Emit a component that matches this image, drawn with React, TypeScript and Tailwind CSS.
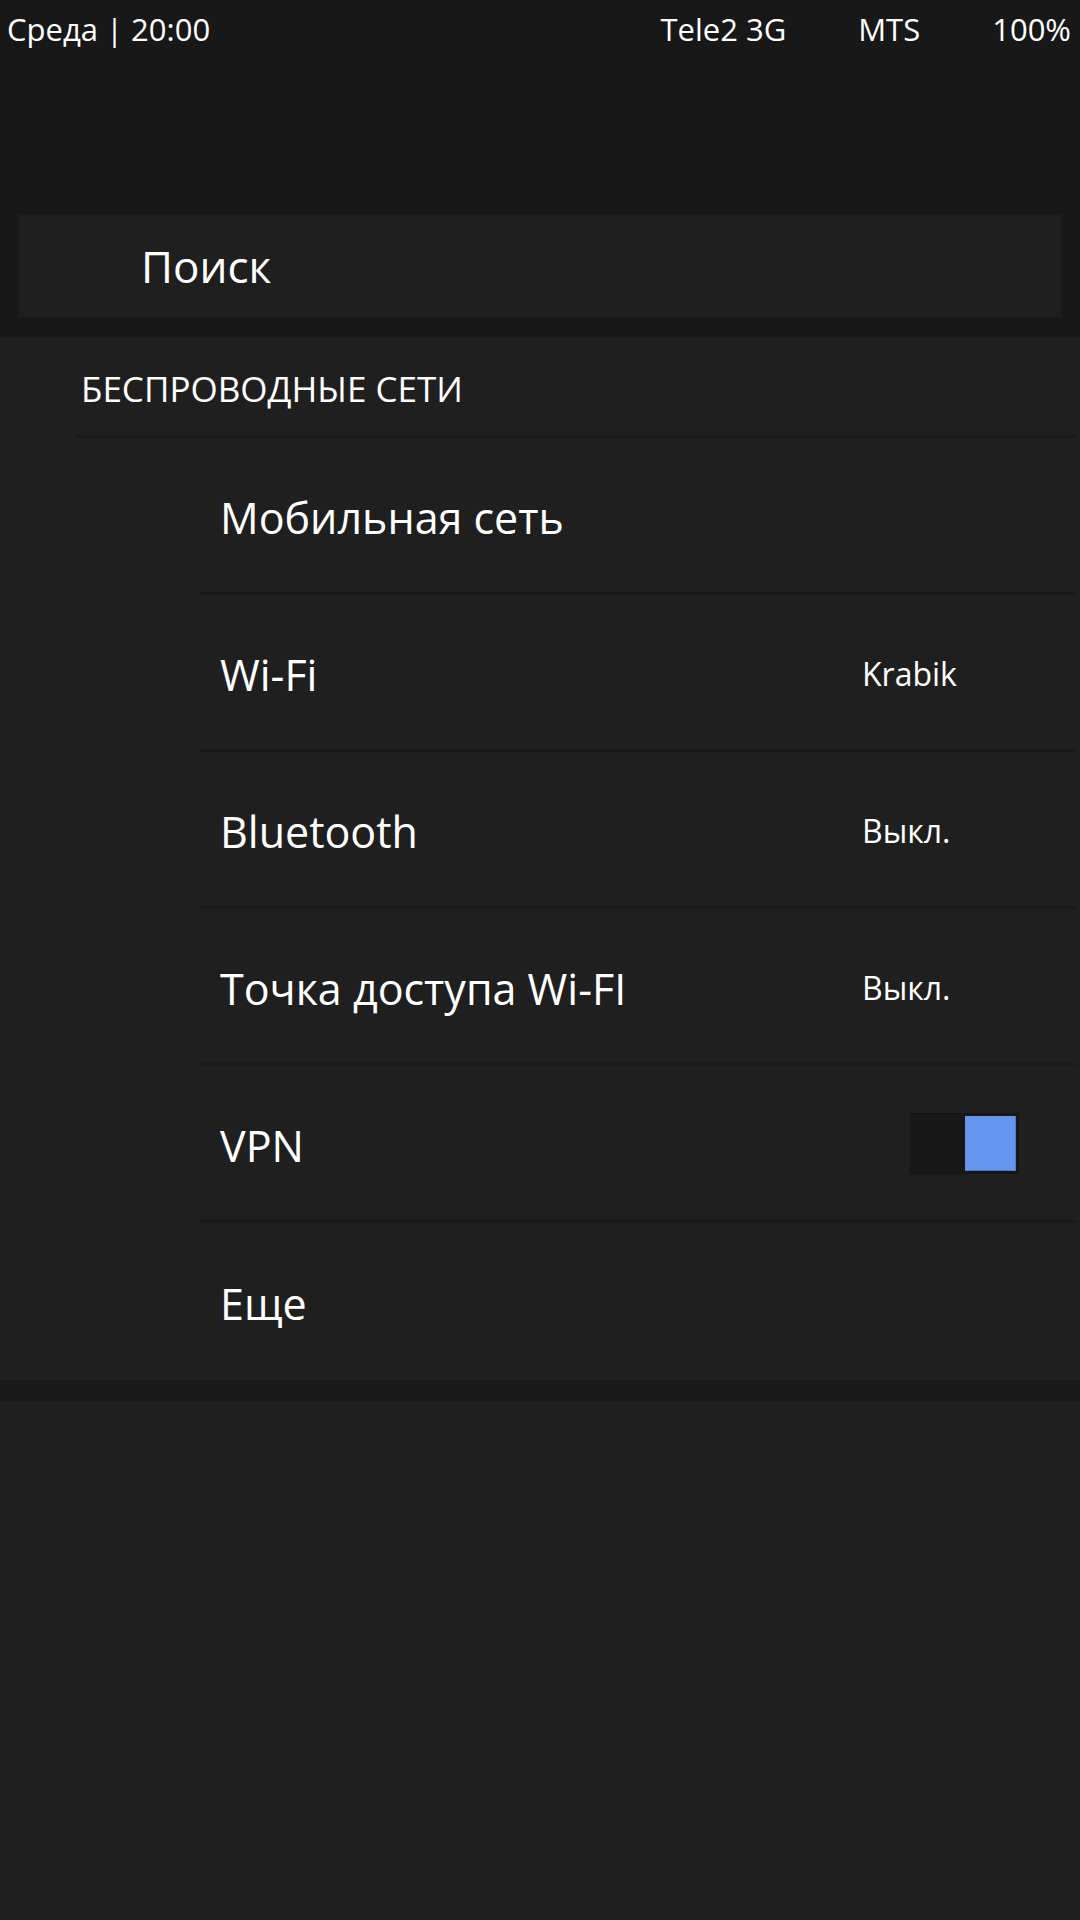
import React from "react";

interface SettingRow {
  title: string;
  value?: string;
  toggle?: boolean;
}

const rows: SettingRow[] = [
  { title: "Мобильная сеть" },
  { title: "Wi-Fi", value: "Krabik" },
  { title: "Bluetooth", value: "Выкл." },
  { title: "Точка доступа Wi-FI", value: "Выкл." },
  { title: "VPN", toggle: true },
  { title: "Еще" },
];

const Toggle: React.FC = () => (
  <div className="-mt-[4px] ml-[48px] flex h-[61px] w-[109px] justify-end border border-[#141414] bg-[#181818] p-[2px]">
    <div className="h-full w-[51px] border-r border-b border-[#4f78c0] bg-[#6695ed]" />
  </div>
);

const App: React.FC = () => {
  return (
    <div className="min-h-[1920px] w-[1080px] bg-[#1f1f1f] font-['Open_Sans',sans-serif] text-white">
      <div className="bg-[#181818] pb-[19px]">
        {/* status bar */}
        <div className="flex h-[58px] items-center pl-[7px] pr-[9px] text-[31px] leading-none">
          <span>Среда | 20:00</span>
          <div className="ml-auto flex gap-[72px]">
            <span>Tele2 3G</span>
            <span>MTS</span>
            <span>100%</span>
          </div>
        </div>

        <div className="ml-[18px] mt-[156px] flex h-[104px] w-[1044px] items-center border border-[#1a1a1a] bg-[#1f1f1f] pl-[122px]">
          <span className="text-[44px] leading-none">Поиск</span>
        </div>
      </div>

      <div className="bg-[#1f1f1f]">
        <div className="ml-[75px] mr-[3px] flex h-[101px] items-center border-b-[3px] border-[#1a1a1a] pl-[6px] pt-[4px]">
          <span className="text-[35px] leading-none">БЕСПРОВОДНЫЕ СЕТИ</span>
        </div>

        {rows.map((row, idx) => (
          <div
            key={idx}
            className={`ml-[200px] mr-[3px] flex h-[157px] items-center pt-[4px] ${
              idx < rows.length - 1 ? "border-b-[3px] border-[#1a1a1a]" : ""
            }`}
          >
            <span className="pl-[20px] text-[43px] leading-none">{row.title}</span>
            <div className="ml-auto flex w-[215px] items-center">
              {row.value && (
                <span className="text-[32px] leading-none">{row.value}</span>
              )}
              {row.toggle && <Toggle />}
            </div>
          </div>
        ))}
      </div>

      <div className="h-[21px] bg-[#191919]" />
    </div>
  );
};

export default App;
